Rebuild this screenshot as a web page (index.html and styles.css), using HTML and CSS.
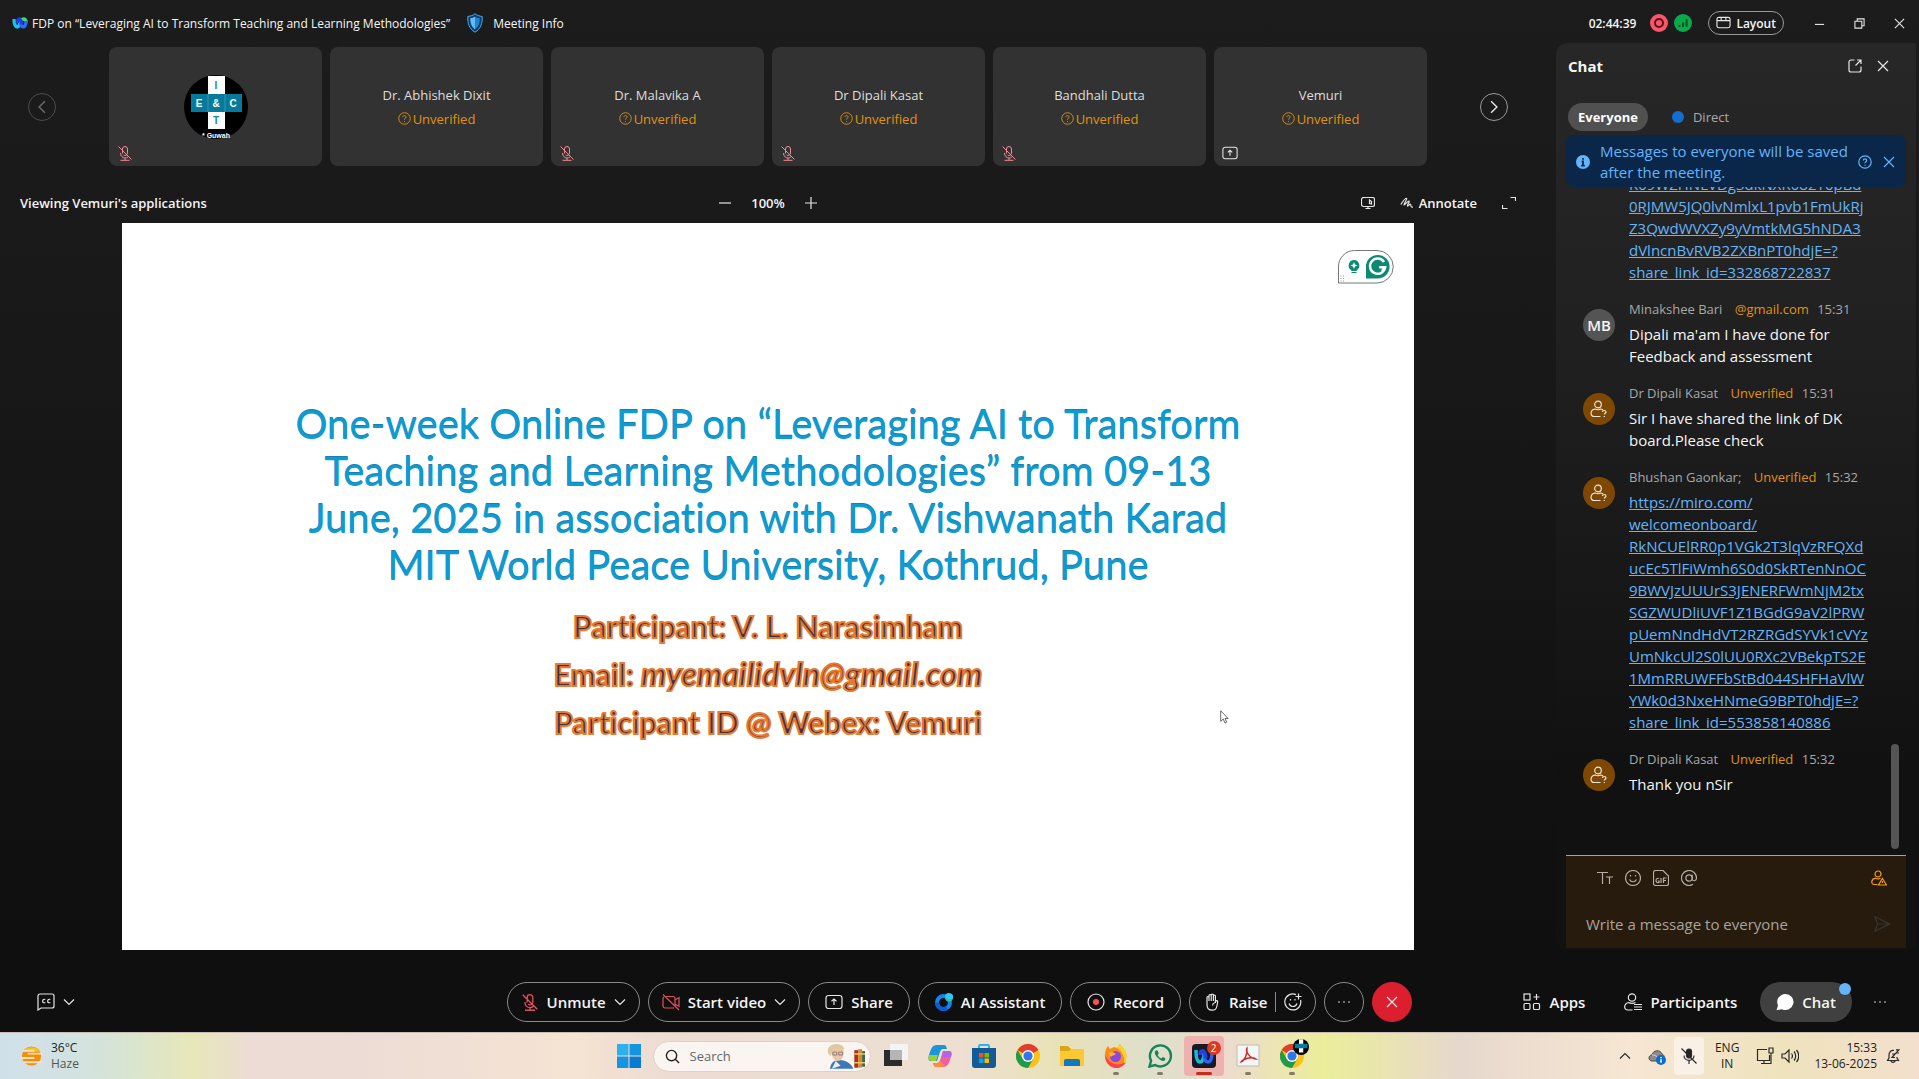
FILE: index.html
```html
<!DOCTYPE html>
<html lang="en">

<head>
    <meta charset="UTF-8">
    <meta name="viewport" content="width=device-width, initial-scale=1.0">
    <title>FDP on “Leveraging AI to Transform Teaching and Learning Methodologies”</title>
    <link rel="stylesheet" href="styles.css">
</head>

<body>
    <!-- shared icons -->
    <svg class="defs" aria-hidden="true">
        <symbol id="mic-off" viewBox="0 0 16 16">
            <path d="M5.500 8.500V4a2.500 2.500 0 0 1 5 0v4a2.500 2.500 0 0 1-4 2M3.500 8c0 3 2 5 4.500 5 1.200 0 2.200-.4 3-1.200M8 13v2M3.500 15.300h9M1.500 1.500l13 13"/>
        </symbol>
        <symbol id="question" viewBox="0 0 14 14">
            <circle cx="7" cy="7" r="6.200"/>
            <path d="M5.300 5.500C5.300 3.300 8.700 3.300 8.700 5.400 8.700 6.700 7 6.700 7 8.200M7 9.700v1"/>
        </symbol>
        <symbol id="chevron" viewBox="0 0 12 12">
            <path d="M1 3.500l5 5 5-5"/>
        </symbol>
        <symbol id="cross" viewBox="0 0 12 12">
            <path d="M1 1l10 10M11 1L1 11"/>
        </symbol>
        <symbol id="guest" viewBox="0 0 18 18">
            <circle cx="8" cy="4.500" r="3.300"/>
            <path d="M10.500 16.500H4.500C-.5 16.500 0 10 5 9c2 1 4 1 6 0 1 .2 1.600.6 2 1M12.500 12c0-2 3.500-2 3.500 0 0 1.300-1.700 1.200-1.700 2.600M14.300 16v1"/>
        </symbol>
        <symbol id="share" viewBox="0 0 18 16">
            <rect x="1" y="1.500" width="16" height="13" rx="2.500"/>
            <path d="M9 11V5M6.500 7.300L9 5l2.500 2.300"/>
        </symbol>
        <symbol id="webex" viewBox="0 0 24 18">
            <path d="M3 3c0 7 2 12 5 12s4-6 4-10" stroke="#17c7e8"/>
            <path d="M12 5c0 5 2 10 5 10 2.500 0 4.500-6 4.500-10" stroke="#2f6bff"/>
            <path d="M8 9c0-4 1-6 3.500-6 3 0 2.500 4 3.500 8" stroke="#1b3fe0"/>
            <path d="M15 4c3-2 5-1 6 2" stroke="#3ddc6c"/>
        </symbol>
        <symbol id="chrome" viewBox="0 0 24 24">
            <circle cx="12" cy="12" r="12" fill="#fbc116"/>
            <path d="M12 12L1.600 6A12 12 0 0 1 22.400 6z" fill="#e33b2e"/>
            <path d="M1.600 6A12 12 0 0 0 12 24l5.200-9H6.800z" fill="#229a4b"/>
            <circle cx="12" cy="12" r="6" fill="#fff"/>
            <circle cx="12" cy="12" r="4.600" fill="#2f78ea"/>
        </symbol>
        <symbol id="cross-logo" viewBox="0 0 64 64">
            <circle cx="32" cy="32" r="32" fill="#000"/>
            <path d="M24 1h17v53H24z" fill="#fff"/>
            <path d="M7 19h51v18H7z" fill="#067a9d"/>
            <path d="M24 19v18M41 19v18" stroke="#3896b1"/>
        </symbol>
    </svg>

    <div class="window">
        <header class="titlebar">
            <svg class="webex-logo" viewBox="0 0 24 18"><use href="#webex"/></svg>
            <h1 class="meeting-title">FDP on “Leveraging AI to Transform Teaching and Learning Methodologies”</h1>
            <button class="meeting-info" type="button">
                <svg class="shield" viewBox="0 0 16 20">
                    <path d="M8 .8c2 1.700 4.500 2.400 7.200 2.600.3 7-1.500 12.600-7.200 15.800C2.300 16 .5 10.400.8 3.400 3.500 3.200 6 2.500 8 .8z" fill="#0b3a63" stroke="#45aef5"/>
                    <path d="M8 3.500c1.500 1 3 1.500 4.800 1.800.1 5-1.300 8.700-4.800 11.200z" fill="#1e85d5"/>
                    <path d="M8 3.500C6.500 4.500 5 5 3.200 5.300c-.1 5 1.300 8.700 4.800 11.200z" fill="#64b9fa"/>
                </svg>
                Meeting Info
            </button>
            <div class="status">
                <span class="clock">02:44:39</span>
                <span class="dot recording"></span>
                <span class="dot signal">
                    <svg viewBox="0 0 18 18"><path d="M5.500 13v-2M9 13V8.500M12.500 13V5" stroke="#04531f" stroke-width="2"/></svg>
                </span>
                <button class="layout-btn" type="button">
                    <svg class="line" viewBox="0 0 16 14"><rect x="1" y="1" width="14" height="11" rx="2"/><path d="M1 4.500h14M5.500 1v3.500M10.500 1v3.500"/></svg>
                    Layout
                </button>
            </div>
            <div class="window-controls">
                <button type="button" aria-label="Minimize"><svg class="line" viewBox="0 0 12 12"><path d="M1 7h10"/></svg></button>
                <button type="button" aria-label="Restore"><svg class="line" viewBox="0 0 12 12"><path d="M1 3.500h7.500V11H1zM3.500 3.500V1H11v7.500H8.500"/></svg></button>
                <button type="button" aria-label="Close"><svg class="line" viewBox="0 0 12 12"><use href="#cross"/></svg></button>
            </div>
        </header>

        <div class="content">
            <main class="stage">
                <section class="filmstrip">
                    <button class="round-nav disabled" type="button" aria-label="Previous">
                        <svg class="line" viewBox="0 0 12 12"><path d="M8.500 1l-5 5 5 5"/></svg>
                    </button>
                    <div class="tiles">
                        <div class="tile">
                            <svg class="tile-avatar" viewBox="0 0 64 64">
                                <use href="#cross-logo"/>
                                <text x="32" y="14" fill="#1786a6">I</text>
                                <text x="15" y="32">E</text>
                                <text x="32" y="32">&amp;</text>
                                <text x="49" y="32">C</text>
                                <text x="32" y="49" fill="#1786a6">T</text>
                                <text class="caption" x="32" y="63">* Guwah</text>
                            </svg>
                            <svg class="tile-state muted"><use href="#mic-off"/></svg>
                        </div>
                        <div class="tile">
                            <p class="tile-name">Dr. Abhishek Dixit</p>
                            <p class="unverified"><svg><use href="#question"/></svg>Unverified</p>
                        </div>
                        <div class="tile">
                            <p class="tile-name">Dr. Malavika A</p>
                            <p class="unverified"><svg><use href="#question"/></svg>Unverified</p>
                            <svg class="tile-state muted"><use href="#mic-off"/></svg>
                        </div>
                        <div class="tile">
                            <p class="tile-name">Dr Dipali Kasat</p>
                            <p class="unverified"><svg><use href="#question"/></svg>Unverified</p>
                            <svg class="tile-state muted"><use href="#mic-off"/></svg>
                        </div>
                        <div class="tile">
                            <p class="tile-name">Bandhali Dutta</p>
                            <p class="unverified"><svg><use href="#question"/></svg>Unverified</p>
                            <svg class="tile-state muted"><use href="#mic-off"/></svg>
                        </div>
                        <div class="tile">
                            <p class="tile-name">Vemuri</p>
                            <p class="unverified"><svg><use href="#question"/></svg>Unverified</p>
                            <svg class="tile-state line"><use href="#share"/></svg>
                        </div>
                    </div>
                    <button class="round-nav" type="button" aria-label="Next">
                        <svg class="line" viewBox="0 0 12 12"><path d="M3.500 1l5 5-5 5"/></svg>
                    </button>
                </section>

                <div class="share-bar">
                    <span class="viewing">Viewing Vemuri's applications</span>
                    <div class="zoom">
                        <button type="button" aria-label="Zoom out"><svg class="line" viewBox="0 0 12 12"><path d="M0 6h12"/></svg></button>
                        <span>100%</span>
                        <button type="button" aria-label="Zoom in"><svg class="line" viewBox="0 0 12 12"><path d="M0 6h12M6 0v12"/></svg></button>
                    </div>
                    <div class="share-tools">
                        <button type="button" aria-label="Request control">
                            <svg class="line" viewBox="0 0 14 12"><rect x=".5" y=".5" width="13" height="9" rx="2"/><path d="M4.500 11.500h5M7 9.500v2M8.500 3v3.500l2 .5V4.500z"/></svg>
                        </button>
                        <button type="button">
                            <svg class="line" viewBox="0 0 14 12"><path d="M.8 7.500C3 4 5.500.8 6.500 1.300S3.300 7.500 4 8s4-4.500 5-4-2.300 4.500-1.500 5 2.200-2.300 3-1.800-.5 3.300 2.500 2.800"/></svg>
                            Annotate
                        </button>
                        <button type="button" aria-label="Full screen">
                            <svg class="line" viewBox="0 0 14 12"><path d="M8.500.5h5V4M5.500 11.500h-5V8"/></svg>
                        </button>
                    </div>
                </div>

                <article class="slide">
                    <h2>One-week Online FDP on “Leveraging AI to Transform<br>Teaching and Learning Methodologies” from 09-13<br>June, 2025 in association with Dr. Vishwanath Karad<br>MIT World Peace University, Kothrud, Pune</h2>
                    <p>Participant: V. L. Narasimham</p>
                    <p>Email: <em>myemailidvln@gmail.com</em></p>
                    <p>Participant ID @ Webex: Vemuri</p>

                    <svg class="grammarly" viewBox="0 0 56 34">
                        <path d="M.5 33V17A16 16 0 0 1 16.500.5H39a16 16 0 0 1 0 32.500z" fill="#fff" stroke="#777"/>
                        <path d="M16 10a5.500 5.500 0 0 1 3 10l-.5 1h-5l-.5-1a5.500 5.500 0 0 1 3-10zM13.500 22h5v1h-5z" fill="#0b8a72"/>
                        <path d="M16 12l1 2.500 2.500 1L17 16.500 16 19l-1-2.500-2.500-1 2.500-1z" fill="#fff"/>
                        <path d="M28 28.500V17a11.800 11.800 0 1 1 11.800 11.500z" fill="#0b8a72"/>
                        <path d="M46 12a7.600 7.600 0 1 0 1.200 5.200h-6M44 21l3.200-3.800" fill="none" stroke="#fff" stroke-width="2.500"/>
                        <path d="M2.500 26h1M5 26h1M2.500 28.500h1M5 28.500h1M2.500 31h1M5 31h1" stroke="#999"/>
                    </svg>
                    <svg class="pointer" viewBox="0 0 9 14"><path d="M.7.800v10.500L3.200 9l1.800 4 1.700-.8-1.700-3.700h3.200z" fill="#fff" stroke="#444" stroke-width=".8"/></svg>
                </article>
            </main>

            <aside class="chat">
                <div class="chat-head">
                    <h2>Chat</h2>
                    <button type="button" aria-label="Pop out"><svg class="line" viewBox="0 0 14 14"><path d="M6.500 1H3a2 2 0 0 0-2 2v8a2 2 0 0 0 2 2h8a2 2 0 0 0 2-2V7.500M9 1h4v4M13 1L7.500 6.500"/></svg></button>
                    <button type="button" aria-label="Close chat"><svg class="line" viewBox="0 0 14 14"><path d="M2 2l10 10M12 2L2 12"/></svg></button>
                </div>
                <div class="tabs">
                    <button class="tab active" type="button">Everyone</button>
                    <button class="tab" type="button"><span class="new-dot"></span>Direct</button>
                </div>
                <div class="banner">
                    <svg viewBox="0 0 12 12"><circle cx="6" cy="6" r="6" fill="#64b4fa"/><path d="M6 2.500v1.500M4.800 5.500H6v3.500M4.500 9h3" stroke="#0a274a" stroke-width="1.500" fill="none"/></svg>
                    <p>Messages to everyone will be saved<br>after the meeting.</p>
                    <button type="button" aria-label="Help"><svg class="line" viewBox="0 0 14 14"><use href="#question"/></svg></button>
                    <button type="button" aria-label="Dismiss"><svg class="line" viewBox="0 0 14 14"><path d="M2 2l10 10M12 2L2 12"/></svg></button>
                </div>

                <div class="messages">
                    <div class="message">
                        <div class="body">
                            <p class="text"><a href="#">K09WZHNLVDg3dkNXR082Y0pBd<br>0RJMW5JQ0lvNmlxL1pvb1FmUkRj<br>Z3QwdWVXZy9yVmtkMG5hNDA3<br>dVlncnBvRVB2ZXBnPT0hdjE=?<br>share_link_id=332868722837</a></p>
                        </div>
                    </div>
                    <div class="message">
                        <span class="avatar initials">MB</span>
                        <div class="body">
                            <p class="meta">Minakshee Bari <b>@gmail.com</b> <time>15:31</time></p>
                            <p class="text">Dipali ma'am I have done for<br>Feedback and assessment</p>
                        </div>
                    </div>
                    <div class="message">
                        <span class="avatar"><svg class="line"><use href="#guest"/></svg></span>
                        <div class="body">
                            <p class="meta">Dr Dipali Kasat <b>Unverified</b> <time>15:31</time></p>
                            <p class="text">Sir I have shared the link of DK<br>board.Please check</p>
                        </div>
                    </div>
                    <div class="message">
                        <span class="avatar"><svg class="line"><use href="#guest"/></svg></span>
                        <div class="body">
                            <p class="meta">Bhushan Gaonkar; <b>Unverified</b> <time>15:32</time></p>
                            <p class="text"><a href="#">https://miro.com/<br>welcomeonboard/<br>RkNCUElRR0p1VGk2T3lqVzRFQXd<br>ucEc5TlFiWmh6S0d0SkRTenNnOC<br>9BWVJzUUUrS3JENERFWmNjM2tx<br>SGZWUDliUVF1Z1BGdG9aV2lPRW<br>pUemNndHdVT2RZRGdSYVk1cVYz<br>UmNkcUl2S0lUU0RXc2VBekpTS2E<br>1MmRRUWFFbStBd044SHFHaVlW<br>YWk0d3NxeHNmeG9BPT0hdjE=?<br>share_link_id=553858140886</a></p>
                        </div>
                    </div>
                    <div class="message">
                        <span class="avatar"><svg class="line"><use href="#guest"/></svg></span>
                        <div class="body">
                            <p class="meta">Dr Dipali Kasat <b>Unverified</b> <time>15:32</time></p>
                            <p class="text">Thank you nSir</p>
                        </div>
                    </div>
                    <span class="scroll-thumb"></span>
                </div>

                <form class="composer" onsubmit="return false;">
                    <div class="composer-tools">
                        <button type="button" aria-label="Format"><svg class="line" viewBox="0 0 16 16"><path d="M0 2.500h11M5.500 2.500V14M9 7h7M12.500 7v7"/></svg></button>
                        <button type="button" aria-label="Emoji"><svg class="line" viewBox="0 0 16 16"><circle cx="8" cy="8" r="7.500"/><path d="M4.500 9.500c1.500 3 5.500 3 7 0M5.500 5v1.500M10.500 5v1.500"/></svg></button>
                        <button type="button" aria-label="GIF"><svg class="line" viewBox="0 0 16 16"><path d="M.5 2.500a2 2 0 0 1 2-2H10L15.500 6v7.500a2 2 0 0 1-2 2h-11a2 2 0 0 1-2-2zM6 8.500c-3.500-1.500-4.500 5 0 4v-1.500H4.800M8 8v5M10.500 13V8h3M10.500 10.500h2.500"/></svg></button>
                        <button type="button" aria-label="Mention"><svg class="line" viewBox="0 0 16 16"><circle cx="8" cy="8" r="3.200"/><path d="M11.200 4.800V9c0 2.500 4.300 2.500 4.300-1A7.500 7.500 0 1 0 12 14.300"/></svg></button>
                        <button class="warn" type="button" aria-label="Guests present"><svg class="line" viewBox="0 0 16 16"><circle cx="7" cy="4" r="3"/><path d="M6.500 14.500H3.500C-.5 14.500 0 9 4.500 8.200 6 9 8 9 9.500 8.200M11.500 8.500L15.500 15h-8zM11.500 11v2"/></svg></button>
                    </div>
                    <div class="composer-input">
                        <input type="text" placeholder="Write a message to everyone" aria-label="Write a message to everyone">
                        <button class="send" type="submit" aria-label="Send"><svg class="line" viewBox="0 0 16 16"><path d="M1 .8L15.500 8 1 15.200 3.500 8zM3.500 8h12"/></svg></button>
                    </div>
                </form>
            </aside>
        </div>

        <footer class="controls">
            <div class="controls-left">
                <button class="plain" type="button" aria-label="Captions">
                    <svg class="line icon18" viewBox="0 0 18 18"><path d="M1 17V3a2 2 0 0 1 2-2h12a2 2 0 0 1 2 2v10a2 2 0 0 1-2 2H4zM8.300 6.500c-3-1.500-4 4.500 0 3M13.300 6.500c-3-1.500-4 4.500 0 3"/></svg>
                    <svg class="line icon12"><use href="#chevron"/></svg>
                </button>
            </div>
            <div class="controls-center">
                <button class="pill compact" type="button"><svg class="icon18 red"><use href="#mic-off"/></svg>Unmute<svg class="line icon12"><use href="#chevron"/></svg></button>
                <button class="pill compact" type="button"><svg class="icon18 red" viewBox="0 0 18 16"><path d="M4 2.500h7a2 2 0 0 1 2 2v7M12 14H3a2 2 0 0 1-2-2V4.500A2 2 0 0 1 2 3M13 6l4-2.500v9L13 10M1 .5L17 16"/></svg>Start video<svg class="line icon12"><use href="#chevron"/></svg></button>
                <button class="pill" type="button"><svg class="icon18 line"><use href="#share"/></svg>Share</button>
                <button class="pill" type="button">
                    <svg class="icon18" viewBox="0 0 18 18"><circle cx="8.500" cy="9.500" r="6.500" fill="none" stroke="#1384f0" stroke-width="4"/><path d="M2 9.500A6.500 6.500 0 0 0 12 15" fill="none" stroke="#0a5fd0" stroke-width="4"/><circle cx="14" cy="4.500" r="4.200" fill="#35b8a8"/><path d="M10 3a4.200 4.200 0 0 1 8.200 1.500L14 7z" fill="#2fc9f5"/></svg>
                    AI Assistant
                </button>
                <button class="pill" type="button"><svg class="icon18 line" viewBox="0 0 18 18"><circle cx="9" cy="9" r="8"/><circle cx="9" cy="9" r="3" fill="#f5515f" stroke="none"/></svg>Record</button>
                <button class="pill compact" type="button">
                    <svg class="icon18 line" viewBox="0 0 18 18"><path d="M4 10V4.500c0-1.200 2-1.200 2 0V8 2.500c0-1.300 2.200-1.300 2.200 0V8 2c0-1.300 2.200-1.300 2.200 0v6-5c0-1.200 2-1.200 2 0V10l.3-1.500c.5-1.500 2.300-1 2 .5l-.9 4.500c-.5 2.500-2 3.700-4.500 3.700C5.500 17.200 4 15 4 12zM12 9.500c-1.500.5-2.500 1.500-2.500 3"/></svg>
                    Raise
                    <span class="divider"></span>
                    <svg class="icon18 line" viewBox="0 0 18 18"><path d="M12 1.600A8 8 0 1 0 16.600 7M14.500.5v6M11.500 3.500h6M5 10.500c1.500 4 6.500 4 8 0M6.500 6v1.500M11 6v1.500"/></svg>
                </button>
                <button class="circle" type="button" aria-label="More options"><svg class="icon12" viewBox="0 0 12 12"><path d="M0 5.500h2v1H0zM5 5.500h2v1H5zM10 5.500h2v1h-2z" fill="#ccc"/></svg></button>
                <button class="circle leave" type="button" aria-label="Leave meeting"><svg class="icon12 line"><use href="#cross"/></svg></button>
            </div>
            <div class="controls-right">
                <button class="plain" type="button"><svg class="icon18 line" viewBox="0 0 18 18"><rect x="1" y="1" width="6" height="6"/><rect x="1" y="10.500" width="6" height="6" rx="1"/><rect x="10.500" y="10.500" width="6" height="6" rx="1"/><path d="M13.500 1v6M10.500 4h6"/></svg>Apps</button>
                <button class="plain participants" type="button"><svg class="icon18 line" viewBox="0 0 18 18"><circle cx="8" cy="4.500" r="3.700"/><path d="M8.500 17H4C-.5 17-.5 11 4.500 9.500c2 1 5 1 7 0M10 11.500h8M10 14h8M10 16.500h8"/></svg>Participants</button>
                <button class="chat-btn" type="button"><svg class="icon18" viewBox="0 0 18 18"><path d="M9.500 1a8 8 0 1 1-3.500 15.200L.5 17.200 2 12.500A8 8 0 0 1 9.500 1z" fill="#fff"/></svg>Chat<span class="chat-dot"></span></button>
                <button class="plain" type="button" aria-label="More panels"><svg class="icon12" viewBox="0 0 12 12"><path d="M0 5.500h2v1H0zM5 5.500h2v1H5zM10 5.500h2v1h-2z" fill="#ccc"/></svg></button>
            </div>
        </footer>
    </div>

    <nav class="taskbar">
        <button class="weather" type="button">
            <svg viewBox="0 0 24 22"><circle cx="12" cy="11" r="10" fill="#f58c0a"/><path d="M3.500 6.500a10 10 0 0 1 17 0z" fill="#fdc010"/><path d="M3 5.500h12M8 8.500h15M1 13h14M4 17.500h19" stroke="#f4e3c1" stroke-width="2"/></svg>
            <span>36°C<small>Haze</small></span>
        </button>
        <div class="apps">
            <button type="button" aria-label="Start"><svg viewBox="0 0 24 24"><path d="M0 0h11.500v11.500H0z" fill="#2cb1ee"/><path d="M12.500 0H24v11.500H12.500zM0 12.500h11.500V24H0z" fill="#1794e0"/><path d="M12.500 12.500H24V24H12.500z" fill="#0a7bd3"/></svg></button>
            <label class="search">
                <svg viewBox="0 0 16 16"><circle cx="7" cy="7" r="5.500"/><path d="M11 11l4 4"/></svg>
                <input type="text" placeholder="Search">
                <svg class="search-art" viewBox="0 0 40 26">
                    <path d="M3 26c1-7 5-9 10-9s12 3 14 9z" fill="#3c78b8"/>
                    <path d="M5 26l4-8 5 5z" fill="#e5ecf2"/>
                    <path d="M4 7c0-5 13-5 13 1 0 6-2 10-6 10S5 13 4 7z" fill="#ecc4a8"/>
                    <path d="M1 9C-1-1 16-2 18 6c-4 0-8-2-11-1-2 0-2 5-3 8-2-1-3-2-3-4z" fill="#dccaa0"/>
                    <path d="M6 9h4v3H6zM12 9h4v3h-4z" fill="none" stroke="#555" stroke-width=".6"/>
                    <path d="M28 7h4v18h-4z" fill="#a8321e"/><path d="M32 6h4v19h-4z" fill="#d98b2b"/><path d="M36 8h3v16h-3z" fill="#38694d"/>
                    <path d="M28 11h11M28 20h11" stroke="#f0c565"/>
                </svg>
            </label>
            <button type="button" aria-label="Task view"><svg viewBox="0 0 24 24"><path d="M0 6h18v16H0z" fill="#2b2b2b"/><path d="M6 0h18v16H6z" fill="#f4f4f4"/><path d="M6 6h12v10H6z" fill="#b5b5b5"/></svg></button>
            <button type="button" aria-label="Copilot"><svg viewBox="0 0 24 24"><path d="M9 1h7c2 0 2 1.500 3 4h-4c-2 0-3 2-4 6l-2 6H4c-4 0-4-2-3-6C3 5 4 1 9 1z" fill="#1995d8"/><path d="M1 11h9l-2 6H4c-4 0-4-3-3-6z" fill="#9bcf38"/><path d="M15 23H8c-2 0-2-1.500-3-4h4c2 0 3-2 4-6l2-6h5c4 0 4 2 3 6-2 6-3 10-8 10z" fill="#f0609a"/><path d="M15 7h5c4 0 4 2 3 6h-9z" fill="#b365e8"/><path d="M5 19h4c1 0 2-1 3-2l5 4c-2 3-7 2-9 2s-2-1.500-3-4z" fill="#fb8c46"/></svg></button>
            <button type="button" aria-label="Store"><svg viewBox="0 0 24 24"><path d="M7 5V2a1 1 0 0 1 1-1h8a1 1 0 0 1 1 1v3" fill="none" stroke="#23b5ee" stroke-width="2"/><path d="M0 4h24v17a3 3 0 0 1-3 3H3a3 3 0 0 1-3-3z" fill="#135a96"/><path d="M7 9h4.500v4.500H7z" fill="#f25022"/><path d="M12.500 9H17v4.500h-4.500z" fill="#7fba00"/><path d="M7 14.500h4.500V19H7z" fill="#00a4ef"/><path d="M12.500 14.500H17V19h-4.500z" fill="#ffb900"/></svg></button>
            <button type="button" aria-label="Chrome"><svg viewBox="0 0 24 24"><use href="#chrome"/></svg></button>
            <button type="button" aria-label="Files"><svg viewBox="0 0 24 24"><path d="M0 2h8l3 3h13v17H0z" fill="#dda516"/><path d="M0 7h9l2-2h13v17H0z" fill="#fcc934"/><path d="M4 22v-5a2 2 0 0 1 2-2h12a2 2 0 0 1 2 2v5z" fill="#1378bf"/></svg></button>
            <button class="running" type="button" aria-label="Firefox"><svg viewBox="0 0 24 24"><path d="M2 5c1-2 2-3 2-3l2 3c3-2 5-2 7-1 1-2 2-3 3-4 1 3 5 4 6 9 2 8-3 15-10 15S-2 16 2 5z" fill="#ff8a1c"/><path d="M16 0c1 3 5 4 6 9 1 4 0 8-2 11 1-6-1-12-7-16 1-2 2-3 3-4z" fill="#ffd42a"/><path d="M1 11c0 8 6 13 11 13 4 0 8-2 10-6-6 4-16 4-21-7z" fill="#fb3f55"/><circle cx="11.500" cy="12.500" r="5.500" fill="#8a48d8"/><path d="M5 9c2-2 5-1 7 1-2 2-4 1-5 3-1-1-2-2-2-4z" fill="#ffb32a"/></svg></button>
            <button class="running" type="button" aria-label="WhatsApp"><svg viewBox="0 0 24 24"><path d="M1.500 22.500l1.600-5.800A10.500 10.500 0 1 1 7.200 21z" fill="none" stroke="#188455" stroke-width="2.400"/><path d="M8 6.500c-2 1-1.500 4 1.500 7s6 4.500 7.500 2.500c.6-1 .6-1.500-.2-2l-2-1-1.500 1.500c-1.500-.5-3-2-3.600-3.500L10.800 9.500l-1-2.500c-.4-.8-1-.8-1.800-.5z" fill="#188455"/></svg></button>
            <button class="running current" type="button" aria-label="Webex"><svg viewBox="0 0 24 24"><rect width="24" height="24" rx="4" fill="#161a26"/><g fill="none" stroke-width="3.500"><path d="M4 6c0 6 1 12 4 12s4-6 4-9" stroke="#19b9da"/><path d="M12 9c0 4 1 9 4 9s4-6 4-11" stroke="#2b63f6"/><path d="M8 11c0-4 3-6 5-2l1 5" stroke="#2840d8"/></g></svg><span class="count">2</span></button>
            <button class="running" type="button" aria-label="Acrobat"><svg viewBox="0 0 24 24"><path d="M1 1h22v21H1z" fill="#f6f6f6" stroke="#bbb"/><path d="M5 18c3-1 7-8 6-14-2 3 3 11 9 11-5-3-13 0-15 3z" fill="none" stroke="#cc2424" stroke-width="1.300"/></svg></button>
            <button class="running" type="button" aria-label="Chrome profile"><svg viewBox="0 0 24 24"><use href="#chrome"/></svg><svg class="profile" viewBox="0 0 64 64"><use href="#cross-logo"/></svg></button>
        </div>
        <div class="tray">
            <button type="button" aria-label="Hidden icons"><svg class="dark icon12" viewBox="0 0 12 12"><path d="M1 8.500l5-5 5 5"/></svg></button>
            <button type="button" aria-label="OneDrive"><svg class="icon18" viewBox="0 0 18 18"><path d="M4 14C0 14 0 8 4 8c1-5 8-6 10-1 3 1 3 6 0 7z" fill="#8b8b8b" stroke="#4c4c4c"/><path d="M4 8c4 0 6 2 8 6" stroke="#ddd" fill="none"/><circle cx="13" cy="13" r="5" fill="#0c6cc8"/><path d="M13 10v1.200M13 12.300v3.500" stroke="#fff" stroke-width="1.500"/></svg></button>
            <button class="tray-mic" type="button" aria-label="Microphone muted"><svg class="dark icon18" viewBox="0 0 18 18"><rect x="6.500" y="2" width="5" height="9" rx="2.500" fill="#222"/><path d="M4 8.500c0 6.500 10 6.500 10 0M9 13.500V17M1.500 1.500l15 15"/></svg></button>
            <button class="lang" type="button">ENG<br>IN</button>
            <button class="system" type="button" aria-label="Network and volume">
                <svg class="dark icon18" viewBox="0 0 18 18"><path d="M11 2.500H1.500v11h12V8M5 16.500h8M8 13.500v3M13 1h4v5h-4zM15 6v10.500h-2"/></svg>
                <svg class="dark icon18" viewBox="0 0 18 18"><path d="M1 7v4h3l4 4V3L4 7zM10.500 6.500c1.200 1.500 1.200 3.500 0 5M13 4.500c2.300 2.500 2.300 6.500 0 9M15.500 3c3 3.500 3 8.500 0 12"/></svg>
            </button>
            <button class="date" type="button">15:33<br>13-06-2025</button>
            <button type="button" aria-label="Notifications"><svg class="dark icon14" viewBox="0 0 14 14"><path d="M8 1.500C5 1 3 3 3 6v3l-1.500 2.500h11L11 9V8M5 11.500c0 2.500 4 2.500 4 0M10 .8h3L10 4h3M6 5h3L6 8.500h3"/></svg></button>
        </div>
    </nav>
</body>

</html>
```

FILE: styles.css
```css
:root {
    --line: #e6e6e6;
    --orange: #e0920f;
    --link: #64b4fa;
    --red: #e0505c;
}

* {
    margin: 0;
    padding: 0;
    box-sizing: border-box;
}

body {
    display: flex;
    flex-direction: column;
    height: 100vh;
    overflow: hidden;
    background: #0f0f0f;
    color: #f5f5f5;
    font-family: "Open Sans", "Noto Sans", sans-serif;
    font-size: 13px;
}

button,
input {
    background: none;
    border: none;
    color: inherit;
    font: inherit;
}

button {
    display: flex;
    align-items: center;
    cursor: pointer;
}

svg {
    display: block;
    flex: none;
}

.defs {
    position: absolute;
    width: 0;
    height: 0;
}

.line {
    fill: none;
    stroke: var(--line);
    stroke-width: 1.2;
}

.icon12 {
    width: 12px;
    height: 12px;
}

.icon14 {
    width: 14px;
    height: 14px;
}

.icon18 {
    width: 18px;
    height: 18px;
}

.window {
    flex: 1;
    min-height: 0;
    display: flex;
    flex-direction: column;
    background: linear-gradient(#1c1c1c, #181818 35%, #0f0f0f 90%);
}

/* title bar */
.titlebar {
    display: flex;
    align-items: center;
    height: 43px;
    padding: 3px 0 0 12px;
    font-weight: 600;
    font-size: 12px;
}

.webex-logo {
    width: 16px;
    height: 14px;
    margin-right: 4px;
    fill: none;
    stroke-width: 5;
}

.meeting-title {
    font-size: 12px;
    font-weight: 500;
}

.meeting-info {
    gap: 10px;
    margin-left: 17px;
    font-weight: 500;
}

.shield {
    width: 16px;
    height: 20px;
}

.status {
    display: flex;
    align-items: center;
    gap: 6px;
    margin-left: auto;
}

.clock {
    margin-right: 8px;
}

.dot {
    display: flex;
    justify-content: center;
    align-items: center;
    width: 18px;
    height: 18px;
    border-radius: 50%;
}

.recording {
    background: #f8596a;
}

.recording::after {
    content: "";
    width: 6px;
    height: 6px;
    border: 2px solid #5c0e18;
    border-radius: 50%;
}

.signal {
    background: #08ab4b;
}

.layout-btn {
    gap: 5px;
    height: 24px;
    margin-left: 10px;
    padding: 0 7px;
    border: 1px solid #999;
    border-radius: 12px;
}

.layout-btn svg {
    width: 15px;
    height: 14px;
}

.window-controls {
    display: flex;
    margin-left: 15px;
}

.window-controls button {
    justify-content: center;
    width: 40px;
    height: 30px;
}

.window-controls svg {
    width: 11px;
    height: 11px;
}

/* stage */
.content {
    flex: 1;
    min-height: 0;
    display: flex;
    gap: 20px;
    padding-right: 3px;
}

.stage {
    flex: 1;
    min-width: 0;
    display: flex;
    flex-direction: column;
    padding-top: 4px;
}

.filmstrip {
    display: flex;
    justify-content: space-between;
    align-items: center;
    padding: 0 28px;
}

.round-nav {
    justify-content: center;
    width: 28px;
    height: 28px;
    border: 1px solid #999;
    border-radius: 50%;
}

.round-nav svg {
    width: 14px;
    height: 14px;
}

.round-nav.disabled {
    opacity: 0.4;
}

.tiles {
    flex: 1;
    display: grid;
    grid-template-columns: repeat(6, 1fr);
    gap: 8px;
    margin: 0 53px;
}

.tile {
    position: relative;
    display: flex;
    flex-direction: column;
    justify-content: center;
    align-items: center;
    gap: 4px;
    height: 119px;
    background: #323232;
    border-radius: 8px;
    color: #dedede;
}

.tile p {
    line-height: 20px;
}

.tile-avatar {
    width: 64px;
    height: 64px;
    fill: #fff;
    font-family: "Liberation Sans", sans-serif;
    font-size: 10px;
    font-weight: 700;
    text-anchor: middle;
}

.caption {
    font-size: 7px;
}

.unverified {
    display: flex;
    align-items: center;
    gap: 2px;
    color: var(--orange);
}

.unverified svg {
    width: 13px;
    height: 13px;
    fill: none;
    stroke: var(--orange);
}

.tile-state {
    position: absolute;
    left: 8px;
    bottom: 5px;
    width: 16px;
    height: 16px;
}

.muted {
    fill: none;
    stroke: #f28b96;
}

.share-bar {
    display: grid;
    grid-template-columns: 1fr auto 1fr;
    align-items: center;
    height: 57px;
    padding: 17px 20px 0;
    font-weight: 600;
}

.viewing {
    font-weight: 600;
}

.zoom,
.share-tools {
    display: flex;
    align-items: center;
}

.zoom {
    gap: 20px;
}

.zoom svg {
    width: 12px;
    height: 12px;
}

.share-tools {
    gap: 25px;
    justify-self: end;
}

.share-tools button {
    gap: 5px;
}

.share-tools svg {
    width: 14px;
    height: 12px;
}

.slide {
    position: relative;
    flex: 1;
    margin: 0 122px;
    padding-top: 178px;
    background: #fff;
    text-align: center;
    font-family: Lato, sans-serif;
    font-variant-ligatures: none;
}

.slide h2 {
    margin-bottom: 13px;
    color: #0d9bd2;
    font-size: 40px;
    font-weight: 400;
    line-height: 47px;
    text-shadow: 0 -1px 0 #1a7fae;
}

.slide p {
    color: #3a3350;
    font-size: 30px;
    font-weight: 700;
    line-height: 48px;
    -webkit-text-stroke: 2px #e87a2e;
}

.slide em {
    font-size: 32px;
}

.grammarly {
    position: absolute;
    top: 27px;
    right: 20px;
    width: 56px;
    height: 34px;
}

.pointer {
    position: absolute;
    top: 67%;
    left: 85%;
    width: 9px;
    height: 14px;
}

/* chat panel */
.chat {
    display: flex;
    flex-direction: column;
    width: 360px;
    padding: 0 10px 2px;
    background: linear-gradient(#272727, #212121 30%, #111 80%);
    border-radius: 12px 0 0 12px;
}

.chat-head {
    display: flex;
    align-items: center;
    gap: 14px;
    height: 46px;
    padding: 0 16px 0 2px;
}

.chat-head h2 {
    margin-right: auto;
    font-size: 15px;
}

.chat-head svg,
.banner button svg {
    width: 14px;
    height: 14px;
}

.tabs {
    display: flex;
    gap: 14px;
    padding: 14px 2px 4px;
}

.tab {
    gap: 9px;
    height: 28px;
    padding: 0 10px;
    border-radius: 14px;
    color: #aaa;
}

.tab.active {
    background: #505050;
    color: #fff;
    font-weight: 700;
}

.new-dot {
    width: 12px;
    height: 12px;
    background: #1170cf;
    border-radius: 50%;
}

.banner {
    display: flex;
    align-items: center;
    gap: 10px;
    height: 52px;
    padding: 1px 16px 0 10px;
    background: #0a274a;
    border-radius: 8px;
    color: var(--link);
    font-size: 15px;
    line-height: 21px;
}

.banner > svg {
    width: 14px;
    height: 14px;
}

.banner p {
    flex: 1;
    white-space: nowrap;
}

.banner .line {
    stroke: var(--link);
}

.messages {
    position: relative;
    flex: 1;
    min-height: 0;
    display: flex;
    flex-direction: column;
    justify-content: flex-end;
    gap: 16px;
    padding: 0 0 60px 17px;
    overflow: hidden;
}

.message {
    display: flex;
    gap: 14px;
}

.message:first-child {
    padding-left: 46px;
}

.avatar {
    display: flex;
    justify-content: center;
    align-items: center;
    flex: none;
    width: 32px;
    height: 32px;
    margin-top: 10px;
    background: #7f4802;
    border-radius: 50%;
}

.avatar svg {
    width: 18px;
    height: 18px;
}

.initials {
    background: #545454;
    font-size: 15px;
    font-weight: 600;
}

.meta {
    margin-bottom: 4px;
    color: #a8a8a8;
    line-height: 20px;
}

.meta b {
    margin: 0 5px 0 9px;
    color: var(--orange);
    font-weight: 400;
}

.text {
    font-size: 15px;
    line-height: 22px;
    white-space: nowrap;
}

.text a {
    color: var(--link);
}

.scroll-thumb {
    position: absolute;
    right: 7px;
    bottom: 6px;
    width: 8px;
    height: 105px;
    background: #555;
    border-radius: 4px;
}

.composer {
    height: 93px;
    background: #271b0e;
    border-top: 1px solid #ea9a18;
}

.composer-tools {
    display: flex;
    gap: 12px;
    padding: 14px 19px 0 31px;
}

.composer-tools svg,
.send svg {
    width: 16px;
    height: 16px;
    stroke: #b5aea6;
}

.composer-tools .warn {
    margin-left: auto;
}

.composer-tools .warn svg {
    stroke: #f39c12;
}

.composer-input {
    display: flex;
    align-items: center;
    margin-top: 23px;
    padding: 0 16px 0 20px;
}

.composer-input input {
    flex: 1;
    height: 30px;
    font-size: 15px;
    outline: none;
}

.composer-input input::placeholder {
    color: #a9a39c;
}

.send svg {
    stroke: #383530;
}

/* meeting controls */
.controls {
    display: grid;
    grid-template-columns: 1fr auto 1fr;
    align-items: center;
    padding: 32px 33px 10px;
    font-size: 15px;
    font-weight: 600;
}

.controls-left {
    padding-left: 4px;
}

.controls-center,
.controls-right {
    display: flex;
    align-items: center;
    gap: 8px;
}

.controls-right {
    justify-self: end;
}

.plain,
.pill,
.chat-btn {
    gap: 8px;
    height: 40px;
}

.pill {
    padding: 0 16px;
    border: 1px solid #8a8a8a;
    border-radius: 20px;
}

.pill.compact {
    padding: 0 13px;
}

.red {
    fill: none;
    stroke: var(--red);
    stroke-width: 1.2;
}

.divider {
    width: 1px;
    height: 20px;
    background: #8a8a8a;
}

.circle {
    justify-content: center;
    width: 40px;
    height: 40px;
    border: 1px solid #8a8a8a;
    border-radius: 50%;
}

.leave {
    background: #dc1f2e;
    border-color: #dc1f2e;
}

.participants {
    margin: 0 15px 0 31px;
}

.chat-btn {
    position: relative;
    margin-right: 14px;
    padding: 0 16px;
    background: #404040;
    border-radius: 20px;
}

.chat-dot {
    position: absolute;
    top: 1px;
    right: 1px;
    width: 12px;
    height: 12px;
    background: var(--link);
    border-radius: 50%;
}

/* taskbar */
.taskbar {
    display: grid;
    grid-template-columns: 1fr auto 1fr;
    align-items: center;
    height: 47px;
    padding: 0 19px 0 20px;
    border-top: 1px solid #c9beb6;
    background: linear-gradient(90deg, #d0e0ea, #d3e3dc 5%, #e7e7b8 10%, #ecdcd5 13%, #ecdcd5 18%, #f5e3d3 30%, #ecdcd2 35%, #eedfd2 50%, #e9e2b8 55%, #dedfcb 60%, #ecdccd 64%, #ebee9a 69%, #e7d8cd 76%, #f6e6d3 85%, #efe3bd 93%, #f3dfcc);
    color: #222;
    font-size: 12px;
    line-height: 16px;
}

.weather {
    gap: 8px;
    text-align: left;
}

.weather svg {
    width: 23px;
    height: 22px;
}

.weather small {
    display: block;
    color: #555;
    font-size: 12px;
}

.apps {
    display: flex;
    align-items: center;
    gap: 4px;
}

.apps button {
    position: relative;
    justify-content: center;
    width: 40px;
    height: 40px;
}

.apps button > svg {
    width: 24px;
    height: 24px;
}

.search {
    display: flex;
    align-items: center;
    gap: 10px;
    width: 218px;
    height: 31px;
    padding: 0 4px 0 11px;
    margin-right: 1px;
    background: #fbf5f1;
    border: 1px solid #ddd0c8;
    border-radius: 16px;
}

.search svg {
    width: 15px;
    height: 15px;
    fill: none;
    stroke: #222;
    stroke-width: 1.5;
}

.search .search-art {
    width: 39px;
    height: 26px;
    stroke: none;
}

.search input {
    flex: 1;
    min-width: 0;
    font-size: 13px;
    outline: none;
}

.search input::placeholder {
    color: #666;
}

.running::after {
    content: "";
    position: absolute;
    bottom: 1px;
    width: 6px;
    height: 3px;
    background: #85796d;
    border-radius: 2px;
}

.current {
    background: #edb2ae;
    border-radius: 4px;
    box-shadow: 2px 0 0 #f6d5cf;
}

.current::after {
    width: 16px;
    background: #c42b1c;
}

.count {
    position: absolute;
    top: 5px;
    right: 3px;
    width: 14px;
    height: 14px;
    background: #d93b1e;
    border-radius: 50%;
    color: #fff;
    font-size: 10px;
    line-height: 14px;
}

.apps button .profile {
    position: absolute;
    top: 3px;
    right: 3px;
    width: 16px;
    height: 16px;
}

.tray {
    display: flex;
    align-items: center;
    gap: 9px;
    justify-self: end;
}

.tray button {
    height: 38px;
}

.dark {
    fill: none;
    stroke: #2a2a2a;
    stroke-width: 1.2;
}

.tray .tray-mic {
    justify-content: center;
    width: 30px;
    margin-left: -1px;
    background: #faf1e6;
    border-radius: 4px;
}

.tray button:first-child {
    margin-right: 8px;
}

.lang {
    margin: 0 8px 0 2px;
}

.system {
    gap: 7px;
    margin-right: 6px;
}

.tray .date {
    text-align: right;
}
```
